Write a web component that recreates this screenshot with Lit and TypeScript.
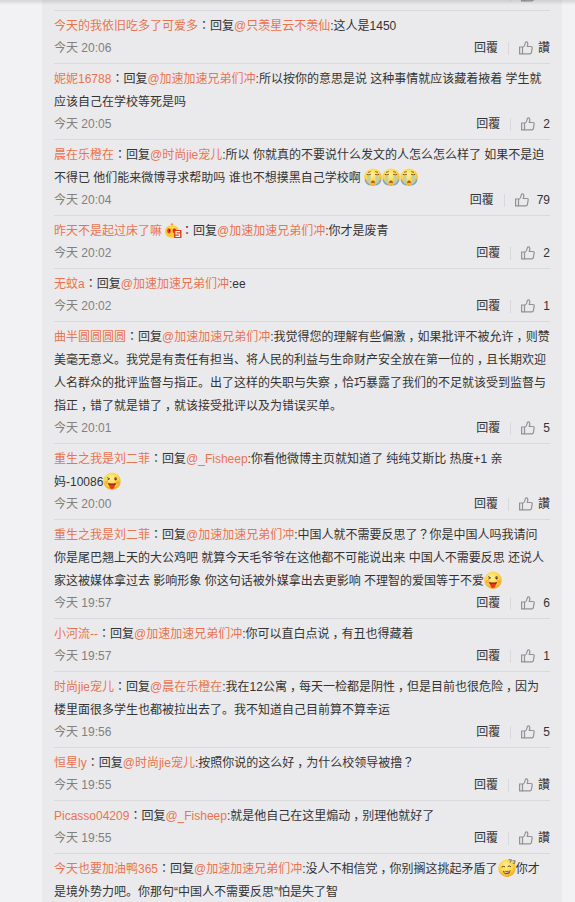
import {LitElement, css, html, svg, nothing} from 'lit';
import {customElement, property} from 'lit/decorators.js';

interface Comment {
  author?: string;
  badge?: boolean;
  lines: string[];
  time?: string;
  likes?: number;
}

const COMMENTS: Comment[] = [
  {lines: [], likes: 1},
  {
    author: '今天的我依旧吃多了可爱多',
    lines: ['回复@只羡星云不羡仙:这人是1450'],
    time: '今天 20:06',
  },
  {
    author: '妮妮16788',
    lines: [
      '回复@加速加速兄弟们冲:所以按你的意思是说 这种事情就应该藏着掖着 学生就',
      '应该自己在学校等死是吗',
    ],
    time: '今天 20:05',
    likes: 2,
  },
  {
    author: '晨在乐橙在',
    lines: [
      '回复@时尚jie宠儿:所以 你就真的不要说什么发文的人怎么怎么样了 如果不是迫',
      '不得已 他们能来微博寻求帮助吗 谁也不想摸黑自己学校啊 [cry][cry][cry]',
    ],
    time: '今天 20:04',
    likes: 79,
  },
  {
    author: '昨天不是起过床了嘛',
    badge: true,
    lines: ['回复@加速加速兄弟们冲:你才是废青'],
    time: '今天 20:02',
    likes: 2,
  },
  {
    author: '无蚊a',
    lines: ['回复@加速加速兄弟们冲:ee'],
    time: '今天 20:02',
    likes: 1,
  },
  {
    author: '曲半圆圆圆圆',
    lines: [
      '回复@加速加速兄弟们冲:我觉得您的理解有些偏激，如果批评不被允许，则赞',
      '美毫无意义。我党是有责任有担当、将人民的利益与生命财产安全放在第一位的，且长期欢迎',
      '人名群众的批评监督与指正。出了这样的失职与失察，恰巧暴露了我们的不足就该受到监督与',
      '指正，错了就是错了，就该接受批评以及为错误买单。',
    ],
    time: '今天 20:01',
    likes: 5,
  },
  {
    author: '重生之我是刘二菲',
    lines: [
      '回复@_Fisheep:你看他微博主页就知道了 纯纯艾斯比 热度+1 亲',
      '妈-10086[wink]',
    ],
    time: '今天 20:00',
  },
  {
    author: '重生之我是刘二菲',
    lines: [
      '回复@加速加速兄弟们冲:中国人就不需要反思了？你是中国人吗我请问',
      '你是尾巴翘上天的大公鸡吧 就算今天毛爷爷在这他都不可能说出来 中国人不需要反思 还说人',
      '家这被媒体拿过去 影响形象 你这句话被外媒拿出去更影响 不理智的爱国等于不爱[wink]',
    ],
    time: '今天 19:57',
    likes: 6,
  },
  {
    author: '小河流--',
    lines: ['回复@加速加速兄弟们冲:你可以直白点说，有丑也得藏着'],
    time: '今天 19:57',
    likes: 1,
  },
  {
    author: '时尚jie宠儿',
    lines: [
      '回复@晨在乐橙在:我在12公寓，每天一检都是阴性，但是目前也很危险，因为',
      '楼里面很多学生也都被拉出去了。我不知道自己目前算不算幸运',
    ],
    time: '今天 19:56',
    likes: 5,
  },
  {
    author: '恒星ly',
    lines: ['回复@时尚jie宠儿:按照你说的这么好，为什么校领导被撸？'],
    time: '今天 19:55',
  },
  {
    author: 'Picasso04209',
    lines: ['回复@_Fisheep:就是他自己在这里煽动，别理他就好了'],
    time: '今天 19:55',
  },
  {
    author: '今天也要加油鸭365',
    lines: [
      '回复@加速加速兄弟们冲:没人不相信党，你别搁这挑起矛盾了[doze]你才',
      '是境外势力吧。你那句“中国人不需要反思”怕是失了智',
    ],
  },
];

const FACES: Record<string, unknown> = {
  cry: svg`
    <path d="M4 4.400 6.800 3.600M11.200 3.600 14 4.400" stroke="#8a5a18" stroke-width=".9"/>
    <path d="M2.800 6.400q2 1 4 0M11.200 6.400q2 1 4 0" stroke="#6b4010" stroke-width=".9" fill="none"/>
    <path d="M3.200 7.400h3.200v8.800q-2.400-.6-3.200-2.200zM11.600 7.400h3.200V14q-.8 1.600-3.200 2.200z" fill="#b5d0b8" opacity=".85"/>
    <path d="M1.200 11.500q.8 4 4.800 5.500M16.800 11.500q-.8 4-4.800 5.500" stroke="#7ba5cc" stroke-width="1.300" fill="none"/>
    <path d="M7.200 15.200q-.2-2.800 1.800-2.800t1.800 2.800q-1.800-1-3.600 0z" fill="#b8501c"/>`,
  wink: svg`
    <path d="M4.200 5.600 6.600 6.800 4.400 8" stroke="#5e3010" stroke-width=".9" fill="none"/>
    <ellipse cx="12.600" cy="6.700" rx="1.200" ry="1.700" fill="#5e3010"/>
    <circle cx="12.900" cy="6.100" r=".5" fill="#fff"/>
    <path d="M5 11q4 1.200 8 0-.4 3.400-4 3.700-3.600-.3-4-3.700z" fill="#7c1c0a"/>
    <path d="M6.600 12.600h4.800v2.700q-.4 1.700-2.400 1.700t-2.400-1.700z" fill="#e8381c"/>
    <circle cx="3.600" cy="10.500" r="1.800" fill="#f88a3c" opacity=".5"/>
    <circle cx="14.500" cy="10.500" r="1.800" fill="#f88a3c" opacity=".5"/>`,
  doze: svg`
    <path d="M3.600 8.200q1.600-1.500 3.400-.4M9.600 7.600q1.600-1.300 3.400.2" stroke="#6b4010" stroke-width="1" fill="none"/>
    <path d="M4.800 11.700q3.800 1.500 8-.5-.6 3.700-4 3.900-3-.1-4-3.400z" fill="#8d3c0c"/>
    <path d="M6 12.600q3 .9 5.600-.3l-.6 1q-2.300.8-4.500.2z" fill="#fff"/>
    <path d="M10.500.800h3l-1.500 3M14.500 1.800h2.700l-.6 2.700-1.800-.4" stroke="#666" stroke-width=".9" fill="none"/>`,
};

@customElement('emote-icon')
export class EmoteIcon extends LitElement {
  @property()
  name = 'cry';

  static styles = css`
    :host {
      display: inline-block;
      width: 18px;
      height: 18px;
      vertical-align: -4px;
    }
    svg {
      display: block;
    }
  `;

  render() {
    return html`<svg width="18" height="18" viewBox="0 0 18 18">
      <defs>
        <radialGradient id="skin" cx=".45" cy=".35" r=".65">
          <stop offset="0" stop-color="#fff09a" />
          <stop offset=".6" stop-color="#fdd545" />
          <stop offset="1" stop-color="#eda92a" />
        </radialGradient>
      </defs>
      <circle cx="9" cy="9.200" r="8.700" fill="url(#skin)" />
      ${FACES[this.name]}
    </svg>`;
  }
}

@customElement('comment-item')
export class CommentItem extends LitElement {
  @property({attribute: false})
  comment!: Comment;

  static styles = css`
    :host {
      display: block;
      border-top: 1px solid #d9d9db;
      padding: 4px 0;
    }
    .line {
      height: 23px;
      line-height: 23px;
      white-space: nowrap;
    }
    .link {
      color: #eb7350;
    }
    .mark,
    .reply,
    .like {
      font-family: 'Liberation Sans', 'Noto Sans CJK TC', sans-serif;
    }
    .comma {
      margin-right: -3px;
      padding-left: 3px;
    }
    .badge {
      width: 17px;
      height: 16px;
      margin: 0 -1px 0 3px;
      vertical-align: -4px;
    }
    .meta {
      display: flex;
      align-items: center;
      height: 21px;
      line-height: 21px;
    }
    .time {
      flex: 1;
      color: #808080;
    }
    .separator {
      width: 1px;
      height: 13px;
      margin: 0 10px;
      background: #d9d9db;
    }
    .like {
      display: flex;
      align-items: center;
      gap: 5px;
    }
    .like.counted {
      gap: 8px;
    }
    .thumb {
      width: 14px;
      height: 14px;
      margin-bottom: 2px;
    }
  `;

  renderText(text: string) {
    return text.split(/(@[^:]+|\[[a-z]+\]|[：，？])/).map((part) => {
      if (part.startsWith('@')) {
        return html`<span class="link">${part}</span>`;
      }
      if (part.startsWith('[')) {
        return html`<emote-icon name=${part.slice(1, -1)}></emote-icon>`;
      }
      if (part === '，') {
        return html`<span class="comma">${part}</span>`;
      }
      if (part === '：' || part === '？') {
        return html`<span class="mark">${part}</span>`;
      }
      return part;
    });
  }

  renderBadge() {
    return html`<svg class="badge" viewBox="0 0 17 16">
      <circle cx="7" cy="1.500" r="1.300" fill="#f0a03c" />
      <path d="M0 8.500Q0 2.500 7 2.500t7 6Q14 14.500 7 14.500T0 8.500z" fill="#fbc838" />
      <path d="M2.500 5Q7 1.800 11.500 5 7 4 2.500 5z" fill="#fde68a" />
      <ellipse cx="4" cy="7.800" rx="1.900" ry="2.600" fill="#e2401b" />
      <ellipse cx="9.500" cy="7.800" rx="1.900" ry="2.600" fill="#e2401b" />
      <path d="M4.500 6.500v2M9 6.500v2" stroke="#7c1c0a" />
      <rect x="9" y="7" width="7.500" height="8" fill="#e2401b" />
      <path d="M15 8.700h-4v2.300h3.500v2.400h-4" stroke="#fff" stroke-width="1.200" fill="none" />
    </svg>`;
  }

  renderAuthor() {
    const {author, badge} = this.comment;
    return html`<span class="link">${author}</span>${badge
        ? this.renderBadge()
        : nothing}<span class="mark">：</span>`;
  }

  renderMeta() {
    const {time, likes} = this.comment;
    return html`<div class="meta">
      <span class="time">${time}</span>
      <span class="reply">回覆</span>
      <span class="separator"></span>
      <span class="like ${likes ? 'counted' : ''}">
        <svg class="thumb" viewBox="0 0 14 14" fill="none" stroke="#929294" stroke-width="1.200">
          <path d="M.6 6h2.900v6.800H.6z" />
          <path
            d="M3.500 6.600Q6 5.200 6.200 2.200 6.300.8 7.400.8q1.400 0 1.400 1.700 0 1.400-.5 3h3.600q1.500 0 1.300 1.400l-.8 4.600q-.3 1.300-1.500 1.300H3.500"
          />
        </svg>
        <span>${likes ?? '讚'}</span>
      </span>
    </div>`;
  }

  render() {
    const {lines, time, likes} = this.comment;
    return html`
      ${lines.map(
        (line, i) =>
          html`<div class="line">${i === 0 ? this.renderAuthor() : nothing}${this.renderText(line)}</div>`
      )}
      ${time || likes ? this.renderMeta() : nothing}
    `;
  }
}

@customElement('app-root')
export class AppRoot extends LitElement {
  static styles = css`
    :host {
      display: block;
      position: relative;
      height: 902px;
      overflow: hidden;
      background: #f2f2f4;
      color: #333;
      font: 12px 'Liberation Sans', 'Noto Sans CJK SC', sans-serif;
    }
    .shade {
      position: absolute;
      top: 0;
      left: 0;
      right: 0;
      height: 5px;
      background: linear-gradient(rgba(0, 0, 0, 0.12), rgba(0, 0, 0, 0));
    }
    .panel {
      box-sizing: border-box;
      width: 520px;
      height: 100%;
      margin-left: 42px;
      padding: 0 12px;
      overflow: hidden;
      background: #eaeaec;
    }
    .list {
      margin-top: -20px;
    }
  `;

  render() {
    return html`
      <div class="panel">
        <div class="list">
          ${COMMENTS.map(
            (comment) => html`<comment-item .comment=${comment}></comment-item>`
          )}
        </div>
      </div>
      <div class="shade"></div>
    `;
  }
}
